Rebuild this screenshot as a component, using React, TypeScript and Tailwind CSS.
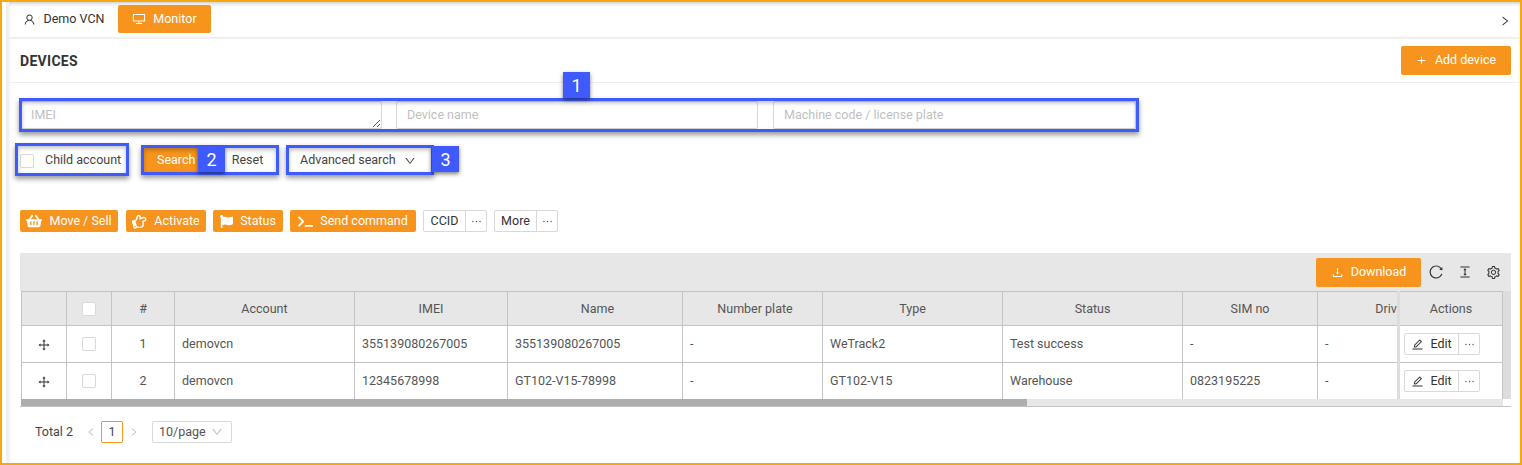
import {
  AiOutlineColumnHeight,
  AiOutlineDesktop,
  AiOutlineDown,
  AiOutlineDownload,
  AiOutlineDrag,
  AiOutlineEdit,
  AiOutlineEllipsis,
  AiOutlineLeft,
  AiOutlinePlus,
  AiOutlineReload,
  AiOutlineRight,
  AiOutlineSetting,
  AiOutlineUser,
} from "react-icons/ai";
import { FaFlag, FaRegHandPointRight, FaShoppingBasket, FaTerminal } from "react-icons/fa";
import type { ReactNode } from "react";

const cols = "grid-cols-[45px_45px_63px_180px_153px_175px_140px_180px_180px_135px_148px]";

const rows = [
  ["1", "demovcn", "355139080267005", "355139080267005", "-", "WeTrack2", "Test success", "-", "-"],
  ["2", "demovcn", "12345678998", "GT102-V15-78998", "-", "GT102-V15", "Warehouse", "0823195225", "-"],
];

const heads = [
  { label: "Account", cls: "" },
  { label: "IMEI", cls: "" },
  { label: "Name", cls: "pl-[5px]" },
  { label: "Number plate", cls: "pl-[5px]" },
  { label: "Type", cls: "" },
  { label: "Status", cls: "" },
  { label: "SIM no", cls: "" },
  { label: "Driver", cls: "" },
];

const Badge = ({ n, className }: { n: string; className: string }) => (
  <div
    className={`absolute flex h-[26px] w-[27px] items-center justify-center bg-[#3f5bff] text-[18px] text-white shadow-[0_2px_4px_rgba(0,0,0,0.5)] ${className}`}
  >
    {n}
  </div>
);

const Frame = ({ className }: { className: string }) => (
  <div
    className={`pointer-events-none absolute border-[3px] border-[#3f5bff] shadow-[0_3px_5px_rgba(0,0,0,0.4),inset_0_2px_4px_rgba(0,0,0,0.25)] ${className}`}
  />
);

const ActionBtn = ({ icon, label, className }: { icon: ReactNode; label: string; className: string }) => (
  <button className={`flex h-[22px] items-center justify-center gap-[7px] rounded-[2px] bg-[#f7941d] text-white ${className}`}>
    {icon}
    {label}
  </button>
);

const SplitBtn = ({ label, className }: { label: ReactNode; className: string }) => (
  <div className="flex h-[22px] rounded-[2px] border border-[#d9d9d9] bg-white text-[#333]">
    <div className={`flex items-center justify-center gap-[6px] border-r border-[#d9d9d9] ${className}`}>{label}</div>
    <div className="flex w-[20px] items-center justify-center text-[#555]">
      <AiOutlineEllipsis size={13} />
    </div>
  </div>
);

const Field = ({ text, className, grip }: { text: string; className: string; grip?: boolean }) => (
  <div className={`relative flex h-[28px] items-center rounded-[2px] border border-[#d9d9d9] bg-white text-[#bfbfbf] ${className}`}>
    {text}
    {grip && (
      <svg className="absolute right-0 bottom-0" width="10" height="10" viewBox="0 0 10 10" stroke="#555" strokeWidth="1">
        <path d="M9 2 2 9M9 6 6 9" />
      </svg>
    )}
  </div>
);

export default function App() {
  return (
    <div className="flex h-[465px] w-[1522px] flex-col overflow-hidden border-x-2 border-t-2 border-b-2 border-[#f5a80f] bg-white font-['Roboto',sans-serif] text-[12.5px] text-[#555]">
      <div className="flex h-full">
        <div className="w-[7px] shrink-0 border-r-[3px] border-[#f0f0f0]" />
        <div className="flex min-w-0 flex-1 flex-col shadow-[inset_0_3px_4px_-2px_rgba(0,0,0,0.25)]">
          {/* tabs */}
          <div className="flex h-[37px] shrink-0 items-start border-b-2 border-[#f0f0f0] pt-[3px] pr-[9px]">
            <div className="flex h-[28px] w-[109px] items-center justify-center gap-[8px] text-[#333]">
              <AiOutlineUser size={13} />
              Demo VCN
            </div>
            <div className="flex h-[28px] w-[93px] items-center justify-center gap-[7px] rounded-[2px] bg-[#f7941d] text-white">
              <AiOutlineDesktop size={14} />
              Monitor
            </div>
            <AiOutlineRight size={12} className="mt-[10px] ml-auto text-[#333]" />
          </div>

          {/* title */}
          <div className="flex h-[44px] shrink-0 items-center justify-between border-b border-[#eeeeee] pr-[9px] pl-[11px]">
            <span className="pt-[2px] text-[14px] font-bold tracking-[0.3px] text-[#333]">DEVICES</span>
            <button className="flex h-[29px] w-[110px] items-center justify-center gap-[8px] rounded-[2px] bg-[#f7941d] text-white">
              <AiOutlinePlus size={11} />
              Add device
            </button>
          </div>

          {/* filters */}
          <div className="relative mt-[18px] flex shrink-0 gap-[14px] pl-[12px]">
            <Field text="IMEI" className="w-[361px] pl-[9px]" grip />
            <Field text="Device name" className="w-[362px] pl-[10px]" />
            <Field text="Machine code / license plate" className="ml-px w-[363px] pl-[10px]" />
            <Frame className="-top-[3px] left-[10px] h-[34px] w-[1120px]" />
            <Badge n="1" className="-top-[29px] left-[554px]" />
          </div>

          <div className="relative mt-[19px] flex h-[25px] shrink-0 items-center pl-[11px] text-[#333]">
            <div className="flex w-[112px] items-center">
              <div className="h-[14px] w-[14px] rounded-[2px] border border-[#d9d9d9] bg-white" />
              <span className="ml-[11px] text-[#444]">Child account</span>
            </div>
            <div className="ml-[11px] flex h-[25px] w-[134px]">
              <div className="flex w-[67px] items-center rounded-l-[2px] bg-[#f7941d] pl-[14px] text-white">Search</div>
              <div className="flex w-[67px] items-center justify-center pl-[8px] text-[#444]">Reset</div>
            </div>
            <div className="ml-[23px] flex items-center text-[#444]">
              Advanced search
              <AiOutlineDown size={12} className="ml-[8px]" />
            </div>
            <Frame className="-top-[5px] left-[6px] h-[33px] w-[114px]" />
            <Frame className="-top-[3px] left-[132px] h-[30px] w-[138px]" />
            <Frame className="-top-[3px] left-[277px] h-[30px] w-[148px]" />
            <Badge n="2" className="-top-[2px] left-[189px]" />
            <Badge n="3" className="-top-[2px] left-[423px]" />
          </div>

          {/* actions */}
          <div className="mt-[37px] flex shrink-0 gap-[7px] pl-[11px]">
            <ActionBtn icon={<FaShoppingBasket size={16} />} label="Move / Sell" className="w-[98px]" />
            <ActionBtn icon={<FaRegHandPointRight size={15} className="-rotate-[15deg]" />} label="Activate" className="ml-[1px] w-[80px]" />
            <ActionBtn icon={<FaFlag size={13} />} label="Status" className="w-[70px]" />
            <ActionBtn icon={<FaTerminal size={15} />} label="Send command" className="w-[126px]" />
            <SplitBtn label="CCID" className="w-[42px]" />
            <SplitBtn label="More" className="w-[42px]" />
          </div>

          {/* table */}
          <div className="mt-[21px] mr-[9px] ml-[11px] shrink-0">
            <div className="flex h-[38px] items-center justify-end bg-[#e7e7e7] pr-[10px] text-[#333]">
              <button className="mr-[7px] flex h-[29px] w-[105px] items-center justify-center gap-[7px] rounded-[2px] bg-[#f7941d] text-white">
                <AiOutlineDownload size={13} />
                Download
              </button>
              <AiOutlineReload size={16} className="mr-[14px]" />
              <AiOutlineColumnHeight size={14} className="mr-[14px]" />
              <AiOutlineSetting size={15} />
            </div>

            <div className="border-b border-[#c4c4c4] pl-px">
              <div className="flex">
                <div className="min-w-0 flex-1 overflow-hidden">
                  <div className={`grid w-max ${cols} h-[35px] items-stretch border-y border-l border-[#c4c4c4] bg-[#e7e7e7]`}>
                    <div className="border-r border-[#c4c4c4]" />
                    <div className="flex items-center justify-center border-r border-[#c4c4c4]">
                      <div className="h-[14px] w-[14px] rounded-[2px] border border-[#d9d9d9] bg-white" />
                    </div>
                    <div className="flex items-center justify-center border-r border-[#c4c4c4] pt-[2px]">#</div>
                    {heads.map((h) => (
                      <div key={h.label} className={`flex items-center justify-center border-r border-[#c4c4c4] pt-[2px] ${h.cls}`}>
                        {h.label}
                      </div>
                    ))}
                  </div>
                  {rows.map((r) => (
                    <div key={r[0]} className={`grid w-max ${cols} h-[37px] border-b border-l border-[#c4c4c4] last:h-[36px] last:border-b-0`}>
                      <div className="flex items-center justify-center border-r border-[#c4c4c4] pt-[2px] text-[#333]">
                        <AiOutlineDrag size={14} />
                      </div>
                      <div className="flex items-center justify-center border-r border-[#c4c4c4]">
                        <div className="h-[14px] w-[14px] rounded-[2px] border border-[#d9d9d9] bg-white" />
                      </div>
                      <div className="flex items-center justify-center border-r border-[#c4c4c4]">{r[0]}</div>
                      {r.slice(1).map((c, i) => (
                        <div key={i} className="flex items-center border-r border-[#c4c4c4] pl-[7px]">
                          {c}
                        </div>
                      ))}
                    </div>
                  ))}
                </div>
                <div className="w-[106px] shrink-0 border-l-[3px] border-[#dddddd]">
                  <div className="flex h-[35px] items-center justify-center border-y border-r border-[#c4c4c4] bg-[#e7e7e7] pt-[2px]">Actions</div>
                  {rows.map((r) => (
                    <div key={r[0]} className="flex h-[37px] items-center border-r border-b border-[#c4c4c4] pl-[4px] last:h-[36px] last:border-b-0">
                      <SplitBtn
                        label={
                          <>
                            <AiOutlineEdit size={13} />
                            Edit
                          </>
                        }
                        className="w-[54px]"
                      />
                    </div>
                  ))}
                </div>
                <div className="w-[8px] shrink-0 bg-[#dddddd]" />
              </div>
              <div className="flex h-[7px]">
                <div className="w-[1006px] bg-[#adadad]" />
                <div className="w-[476px] bg-[#e7e7e7]" />
              </div>
            </div>
          </div>

          {/* pagination */}
          <div className="mt-[14px] flex h-[22px] shrink-0 items-center pl-[26px]">
            <span className="text-[#444]">Total 2</span>
            <AiOutlineLeft size={10} className="ml-[13px] text-[#bbbbbb]" />
            <div className="ml-[5px] flex h-[22px] w-[22px] items-center justify-center rounded-[2px] border border-[#f7941d] text-[#444]">1</div>
            <AiOutlineRight size={10} className="ml-[6px] text-[#bbbbbb]" />
            <div className="ml-[13px] flex h-[22px] w-[80px] items-center justify-between rounded-[2px] border border-[#d9d9d9] pr-[8px] pl-[6px] text-[#555]">
              10/page
              <AiOutlineDown size={12} className="text-[#bbbbbb]" />
            </div>
          </div>
        </div>
      </div>
    </div>
  );
}
